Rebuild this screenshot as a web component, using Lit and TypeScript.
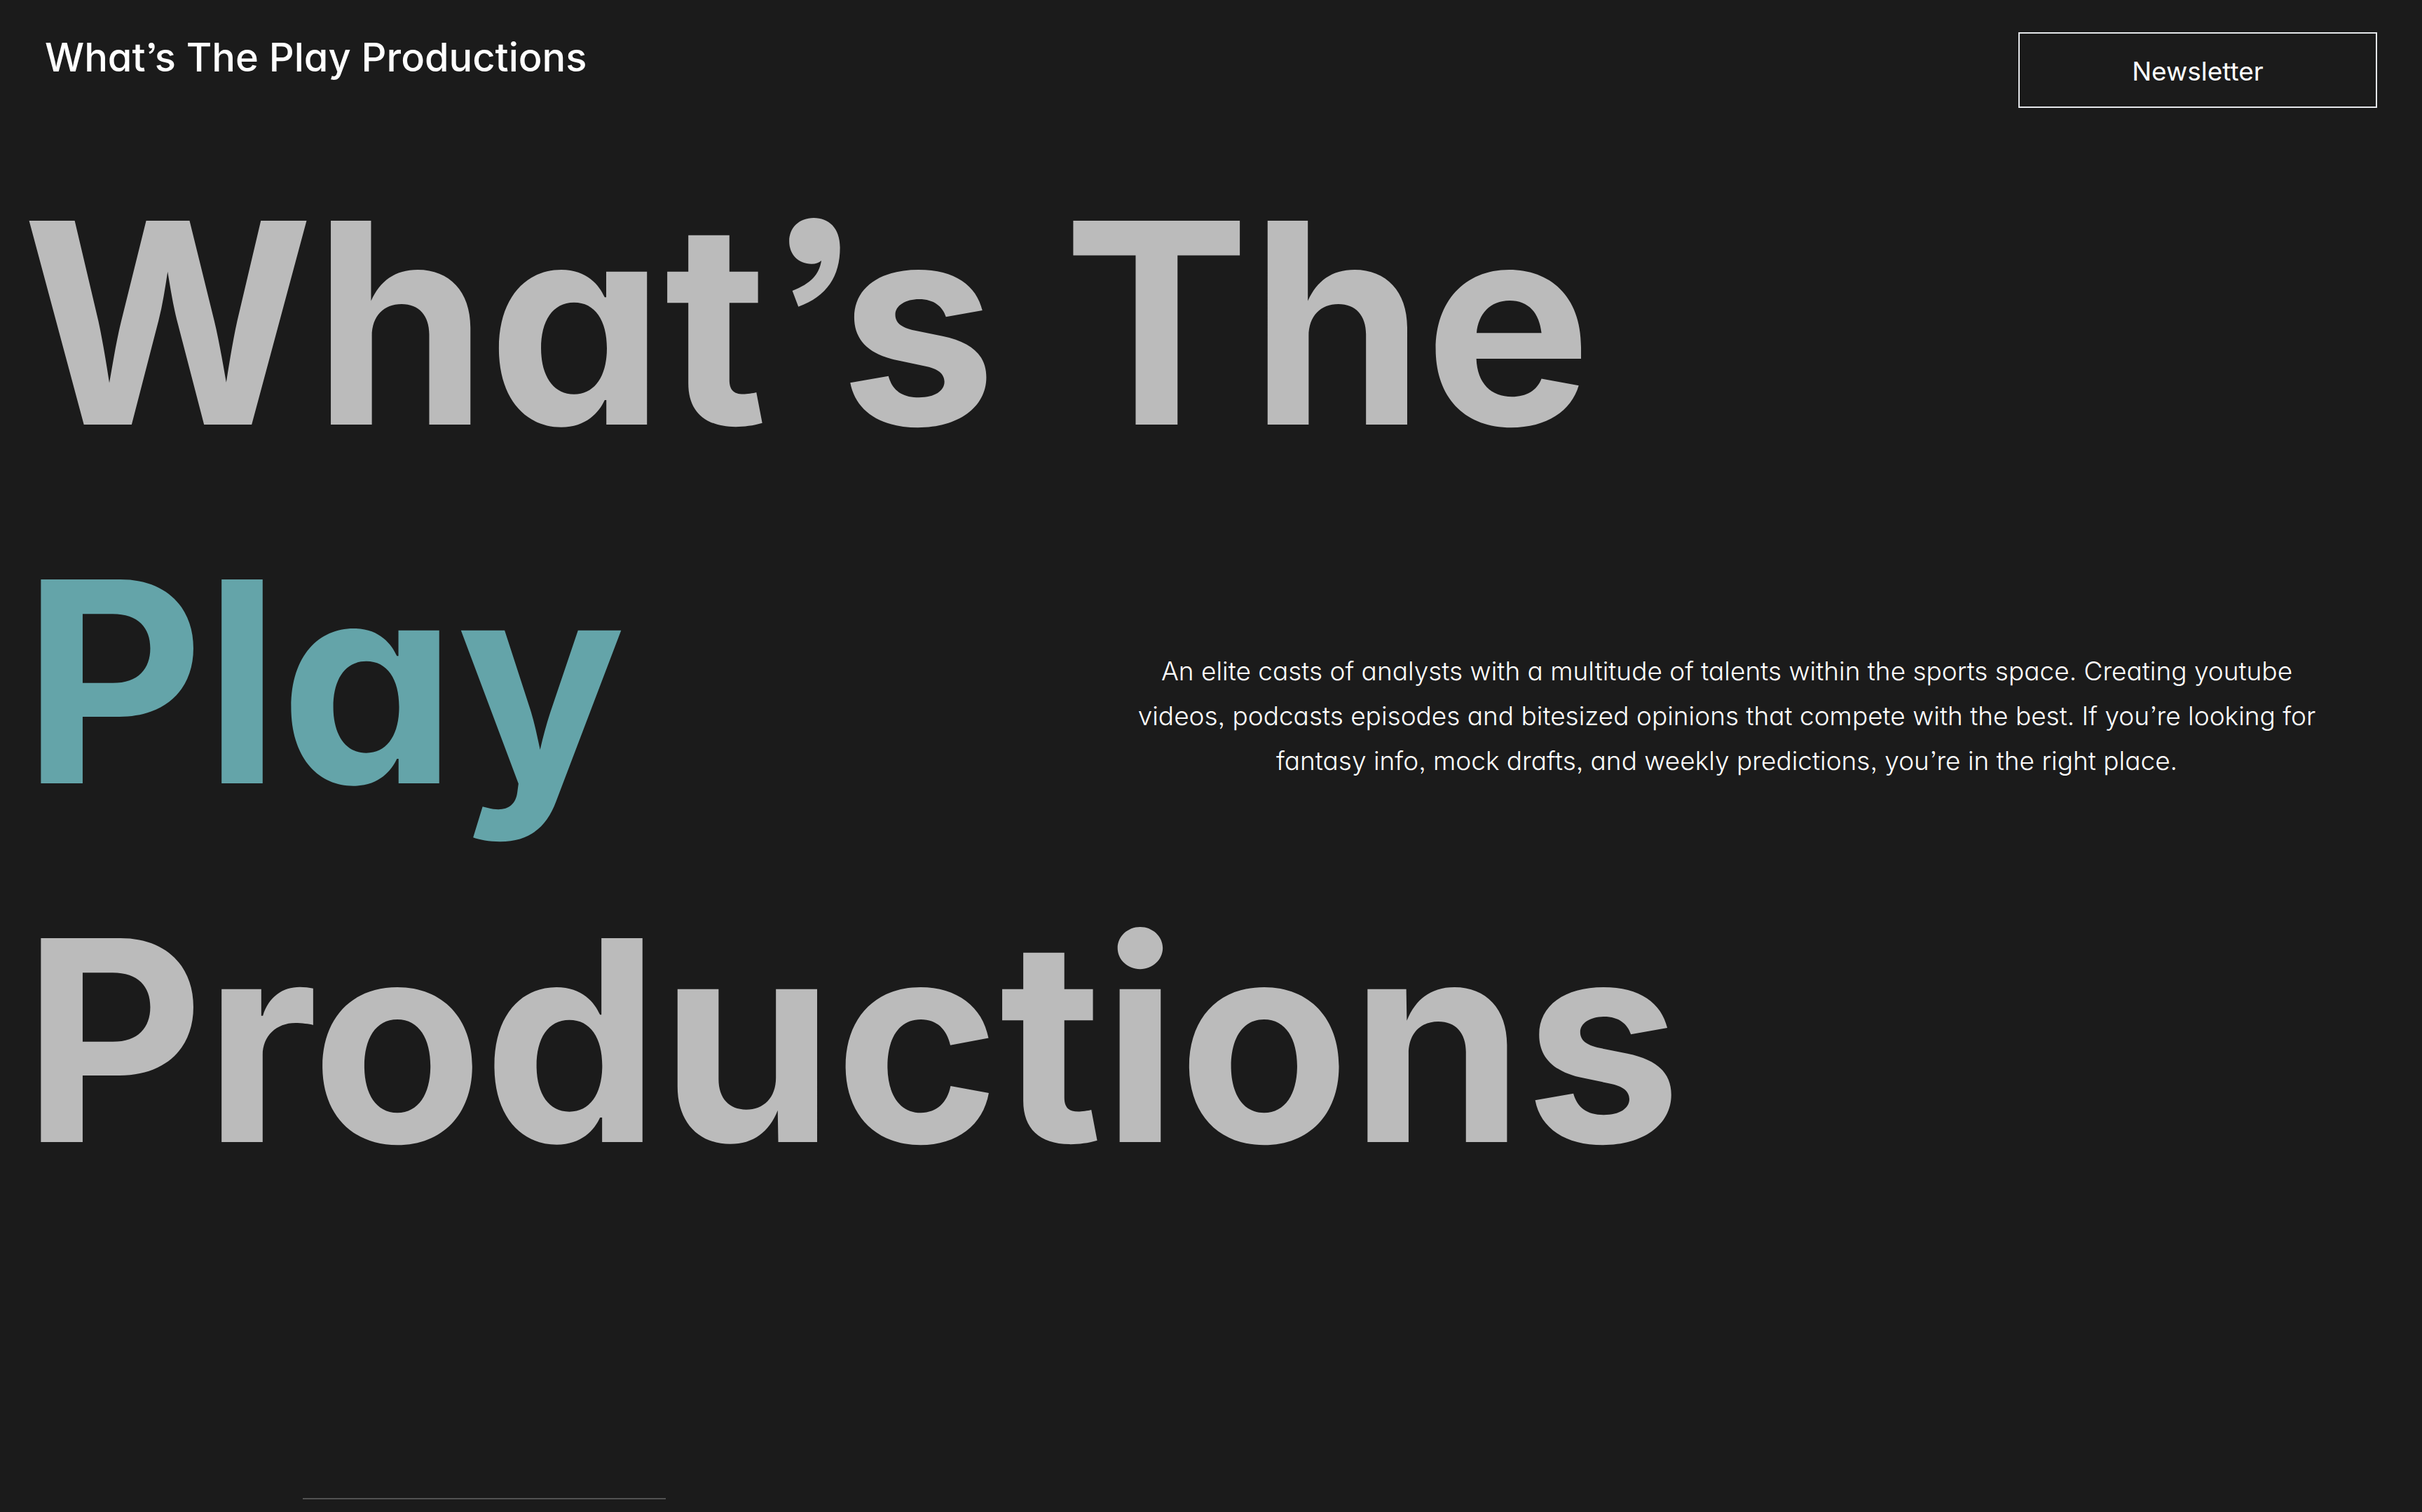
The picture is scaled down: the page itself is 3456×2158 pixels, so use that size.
import { LitElement, html, css } from "lit";
import { customElement } from "lit/decorators.js";

@customElement("app-root")
export class AppRoot extends LitElement {
  static styles = css`
    :host {
      display: block;
      min-height: 100vh;
      box-sizing: border-box;
      overflow: hidden;
      background: #1b1b1b;
      color: #ffffff;
      font-family: Inter, "Liberation Sans", sans-serif;
      font-feature-settings: "cv11" 1, "ss03" 1;
    }

    .header {
      display: flex;
      align-items: flex-start;
      justify-content: space-between;
      padding: 46px 64px 50px;
    }

    .brand {
      color: inherit;
      font-size: 56px;
      font-weight: 500;
      line-height: 72px;
      text-decoration: none;
    }

    .newsletter {
      box-sizing: border-box;
      width: 512px;
      height: 108px;
      padding: 4px 0 0;
      border: 2px solid #e5e7eb;
      background: transparent;
      color: inherit;
      font-family: inherit;
      font-feature-settings: inherit;
      font-size: 37px;
      font-weight: 400;
      line-height: 64px;
      cursor: pointer;
    }

    .hero {
      display: grid;
      grid-template-columns: 23fr 30fr;
      align-items: center;
      padding: 0 32px;
    }

    .title {
      grid-area: 1 / 1 / 2 / 3;
      margin: 0;
      color: #bbbbbb;
      font-size: 400px;
      font-weight: 700;
      line-height: 512px;
    }

    .line {
      display: block;
    }

    .accent {
      color: #64a4a9;
    }

    .intro {
      grid-area: 1 / 2 / 2 / 3;
      margin: 0;
      padding-top: 100px;
      font-size: 37px;
      font-weight: 300;
      line-height: 64px;
      text-align: center;
    }

    .rule {
      width: 15%;
      height: 2px;
      margin: 398px 0 0 12.5%;
      border: 0;
      background: #525252;
    }
  `;

  render() {
    return html`
      <header class="header">
        <a class="brand" href="#">What’s The Play Productions</a>
        <button class="newsletter" type="button">Newsletter</button>
      </header>
      <main>
        <section class="hero">
          <h1 class="title">
            <span class="line">What’s The</span>
            <span class="line accent">Play</span>
            <span class="line">Productions</span>
          </h1>
          <p class="intro">
            An elite casts of analysts with a multitude of talents within the sports space. Creating youtube<br />
            videos, podcasts episodes and bitesized opinions that compete with the best. If you’re looking for<br />
            fantasy info, mock drafts, and weekly predictions, you’re in the right place.
          </p>
        </section>
        <hr class="rule" />
      </main>
    `;
  }
}
